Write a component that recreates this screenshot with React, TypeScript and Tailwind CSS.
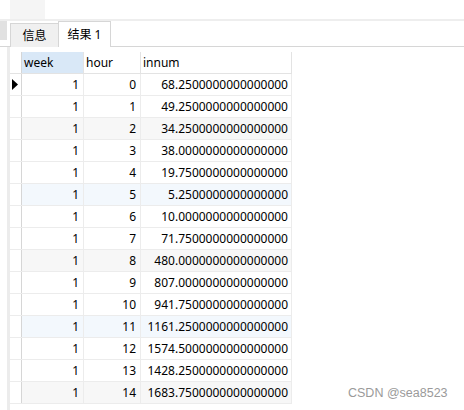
import React from "react";

const rows: [number, number, string][] = [
  [1, 0, "68.2500000000000000"],
  [1, 1, "49.2500000000000000"],
  [1, 2, "34.2500000000000000"],
  [1, 3, "38.0000000000000000"],
  [1, 4, "19.7500000000000000"],
  [1, 5, "5.2500000000000000"],
  [1, 6, "10.0000000000000000"],
  [1, 7, "71.7500000000000000"],
  [1, 8, "480.0000000000000000"],
  [1, 9, "807.0000000000000000"],
  [1, 10, "941.7500000000000000"],
  [1, 11, "1161.2500000000000000"],
  [1, 12, "1574.5000000000000000"],
  [1, 13, "1428.2500000000000000"],
  [1, 14, "1683.7500000000000000"],
];

function rowBg(i: number) {
  if (i % 3 !== 2) return "bg-white";
  return i % 6 === 2 ? "bg-[#f7f7f7]" : "bg-[#f3f8fd]";
}

export default function App() {
  return (
    <div
      className="relative w-[464px] h-[410px] overflow-hidden bg-white text-[12px] text-black"
      style={{ fontFamily: '"Noto Sans", "Noto Sans CJK SC", sans-serif' }}
    >
      {/* top toolbar remnant */}
      <div className="h-[19px] flex">
        <div className="ml-[10px] w-[35px] bg-[#f5f5f5]" />
      </div>
      <div className="h-[2px] bg-[#eeeeee]" />

      {/* tabs */}
      <div className="h-[26px] flex items-end border-b border-[#d6d6d6]">
        <div className="self-start w-[7px] h-[19px] bg-[#e1e1e1]" />
        <div className="ml-[3px] w-[48px] h-[24px] -mb-px bg-[#f0f0f0] border-l border-t border-[#d6d6d6] flex items-center justify-center leading-none pt-px">
          信息
        </div>
        <div className="w-[53px] h-[26px] -mb-px bg-white border-l border-t border-r border-[#d6d6d6] flex items-center justify-center leading-none">
          结果 1
        </div>
      </div>

      {/* grid */}
      <div className="flex h-[363px]">
        <div className="ml-[7px] w-[3px] bg-[#ececec]" />
        <div className="pt-[5px]">
          <div className="flex h-[22px] border-b border-[#e3e3e3]">
            <div className="w-[12px] border-r border-[#d6d6d6] bg-white" />
            <div className="w-[62px] border-r border-[#e3e3e3] bg-[#d9e8f7] pl-[2px] flex items-center">week</div>
            <div className="w-[57px] border-r border-[#e3e3e3] pl-[2px] flex items-center">hour</div>
            <div className="w-[151px] border-r border-[#e3e3e3] pl-[2px] flex items-center">innum</div>
          </div>
          {rows.map(([w, h, n], i) => (
            <div key={i} className={`flex h-[22px] border-b border-[#ececec] ${rowBg(i)}`}>
              <div className="w-[12px] border-r border-[#d6d6d6] bg-white flex items-center justify-center">
                {i === 0 && (
                  <svg width="6" height="11" viewBox="0 0 6 11" className="-ml-[1px]">
                    <path d="M0 0 L6 5.5 L0 11 Z" fill="#000" />
                  </svg>
                )}
              </div>
              <div className="w-[62px] border-r border-[#ececec] pr-[4px] flex items-center justify-end">{w}</div>
              <div className="w-[57px] border-r border-[#ececec] pr-[4px] flex items-center justify-end">{h}</div>
              <div className="w-[151px] border-r border-[#ececec] pr-[3px] flex items-center justify-end">{n}</div>
            </div>
          ))}
        </div>
      </div>

      <div
        className="absolute left-[348px] top-[387px] text-[12.5px] text-[#9a9a9a] leading-none"
        style={{ fontFamily: '"Liberation Sans", Arial, sans-serif' }}
      >
        CSDN @sea8523
      </div>
    </div>
  );
}
